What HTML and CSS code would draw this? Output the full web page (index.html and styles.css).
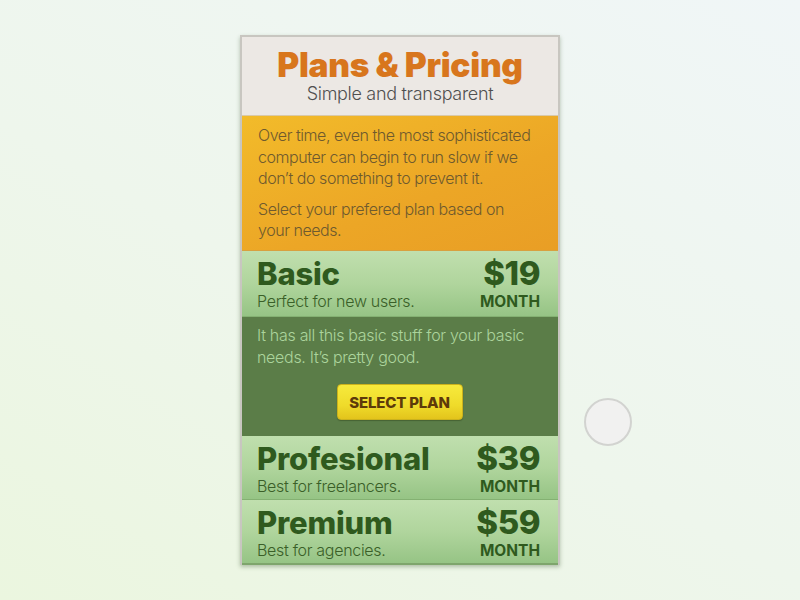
FILE: index.html
```html
<!DOCTYPE html>
<html>
<head>
<meta charset="utf-8">
<link rel="stylesheet" href="styles.css">
</head>
<body>
<div class="stage">
  <div class="card">
    <div class="head">
      <h1 class="title">Plans &amp; Pricing</h1>
      <p class="subtitle">Simple and transparent</p>
    </div>
    <div class="intro">
      <p>Over time, even the most sophisticated computer can begin to run slow if we don’t do something to prevent it.</p>
      <p>Select your prefered plan based on your needs.</p>
    </div>
    <div class="plan plan-first">
      <div class="plan-left">
        <div class="plan-name">Basic</div>
        <div class="plan-desc">Perfect for new users.</div>
      </div>
      <div class="plan-right">
        <div class="price">$19</div>
        <div class="per">MONTH</div>
      </div>
    </div>
    <div class="detail">
      <p>It has all this basic stuff for your basic needs. It’s pretty good.</p>
      <button class="btn">SELECT PLAN</button>
    </div>
    <div class="plan">
      <div class="plan-left">
        <div class="plan-name">Profesional</div>
        <div class="plan-desc">Best for freelancers.</div>
      </div>
      <div class="plan-right">
        <div class="price">$39</div>
        <div class="per">MONTH</div>
      </div>
    </div>
    <div class="plan plan-last">
      <div class="plan-left">
        <div class="plan-name">Premium</div>
        <div class="plan-desc">Best for agencies.</div>
      </div>
      <div class="plan-right">
        <div class="price">$59</div>
        <div class="per">MONTH</div>
      </div>
    </div>
  </div>
  <div class="dot"></div>
</div>
</body>
</html>
```
FILE: styles.css
```css
html, body {
  margin: 0;
  padding: 0;
  height: 100%;
}
body {
  background: linear-gradient(30deg, #ebf6df 0%, #eef6ec 45%, #f0f6f7 100%);
  font-family: Inter, "Noto Sans", sans-serif;
  overflow: hidden;
}
.stage {
  display: flex;
  align-items: flex-start;
  padding-top: 35px;
  padding-left: 240px;
}
.card {
  width: 316px;
  border: 2px solid #c8c6c0;
  border-bottom: none;
  box-shadow: 0 2px 4px rgba(60, 90, 50, 0.35);
  display: flex;
  flex-direction: column;
}
.head {
  background: #ece8e4;
  height: 78px;
  display: flex;
  flex-direction: column;
  align-items: center;
  border-bottom: 1px solid #d9c9a8;
}
.title {
  margin: 9px 0 0;
  font-size: 33.5px;
  font-weight: 900;
  color: #d8761d;
  line-height: 38px;
  letter-spacing: -0.3px;
}
.subtitle {
  margin: -1px 0 0;
  font-size: 18px;
  font-weight: 300;
  color: #505050;
  line-height: 22px;
  letter-spacing: -0.3px;
}
.intro {
  background: linear-gradient(160deg, #f2bb2a 0%, #eca626 60%, #e99e25 100%);
  height: 135px;
  box-sizing: border-box;
  padding: 9px 20px 0 16px;
  border-bottom: 1px solid #d8a040;
}
.intro p {
  margin: 0 0 9px;
  font-size: 16px;
  font-weight: 300;
  line-height: 21.5px;
  color: #6f5a2e;
  letter-spacing: -0.45px;
}
.plan {
  display: flex;
  justify-content: space-between;
  align-items: flex-start;
  height: 64px;
  box-sizing: border-box;
  padding: 4px 18px 0 15px;
  background: linear-gradient(180deg, #c0dfae 0%, #b0d59d 50%, #96c485 100%);
  border-bottom: 1px solid #84b172;
  color: #2f5a1e;
}
.plan-first {
  height: 66px;
}
.plan-last {
  height: 65px;
  border-bottom: 2px solid #7ea56c;
}
.plan-name {
  font-size: 31px;
  font-weight: 800;
  line-height: 37px;
  letter-spacing: -0.2px;
}
.plan-desc {
  font-size: 16px;
  font-weight: 300;
  line-height: 20px;
  margin-top: -1px;
  color: #3a5f28;
  letter-spacing: -0.3px;
}
.plan-right {
  display: flex;
  flex-direction: column;
  align-items: flex-end;
}
.price {
  font-size: 33px;
  font-weight: 800;
  line-height: 37px;
  letter-spacing: -0.5px;
}
.per {
  font-size: 15.5px;
  font-weight: 700;
  line-height: 18px;
  margin-top: 1px;
}
.detail {
  background: #5b7d48;
  height: 119px;
  box-sizing: border-box;
  padding: 7px 16px 0 15px;
  display: flex;
  flex-direction: column;
  align-items: center;
}
.detail p {
  margin: 0;
  align-self: stretch;
  font-size: 16px;
  font-weight: 300;
  line-height: 22px;
  color: #abd49c;
  letter-spacing: -0.3px;
}
.btn {
  margin-top: 16px;
  width: 126px;
  height: 36px;
  border: 1px solid #cbb21c;
  border-radius: 4px;
  background: linear-gradient(180deg, #f7ea3c 0%, #efdb2a 60%, #e3c41c 100%);
  font-family: Inter, "Noto Sans", sans-serif;
  font-size: 15px;
  font-weight: 800;
  color: #5d3a0a;
  padding: 0;
  letter-spacing: -0.2px;
  box-shadow: 0 1px 1px rgba(40, 60, 20, 0.4);
}
.dot {
  width: 44px;
  height: 44px;
  border-radius: 50%;
  margin-left: 24px;
  margin-top: 363px;
  background: #f1f1f0;
  border: 2px solid #d2d3d0;
  box-sizing: content-box;
}
```
